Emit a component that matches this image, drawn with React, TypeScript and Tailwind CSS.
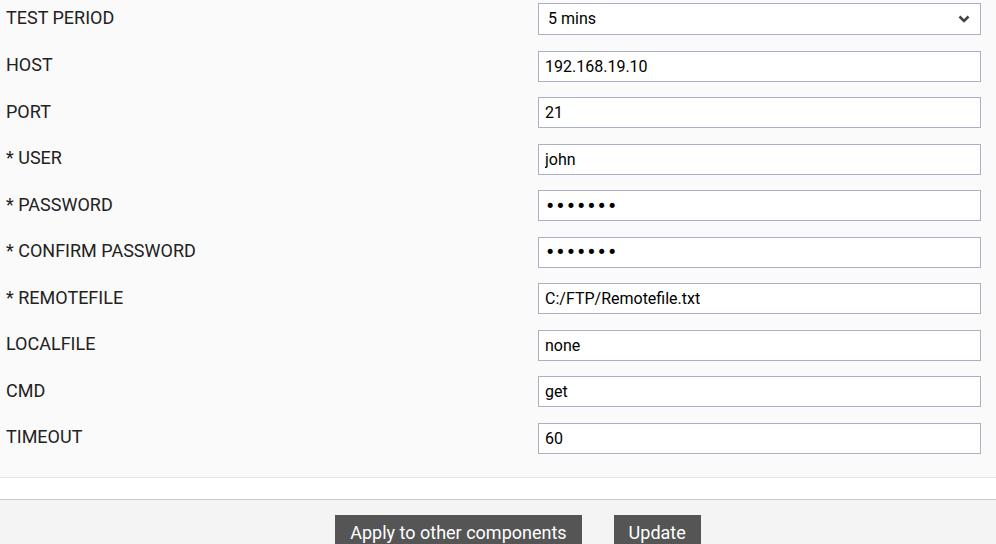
import { useState } from 'react';

const font = { fontFamily: 'Roboto, "Liberation Sans", sans-serif' };
const dotFont = { fontFamily: '"DejaVu Sans", sans-serif', fontSize: '17.5px' };

type Field = { label: string; value: string; type?: string };

const fields: Field[] = [
  { label: 'HOST', value: '192.168.19.10' },
  { label: 'PORT', value: '21' },
  { label: '* USER', value: 'john' },
  { label: '* PASSWORD', value: 'secret1', type: 'password' },
  { label: '* CONFIRM PASSWORD', value: 'secret1', type: 'password' },
  { label: '* REMOTEFILE', value: 'C:/FTP/Remotefile.txt' },
  { label: 'LOCALFILE', value: 'none' },
  { label: 'CMD', value: 'get' },
  { label: 'TIMEOUT', value: '60' },
];

function Row({ label, children }: { label: string; children: React.ReactNode }) {
  return (
    <div className="flex items-center">
      <div className="w-[538px] pl-[6px] text-[18px] leading-[24px] text-[#222] -mt-[2px]">{label}</div>
      {children}
    </div>
  );
}

export default function App() {
  const [period, setPeriod] = useState('5');
  const [values, setValues] = useState(fields.map(f => f.value));

  return (
    <div className="w-[996px] h-[544px] overflow-hidden bg-[#f4f4f4]" style={font}>
      {/* Settings form */}
      <div className="bg-[#fafafa] border-b border-[#e6e6e6] pt-[3px] pb-[23px] flex flex-col gap-[15.5px]">
        <Row label="TEST PERIOD">
          <div className="relative w-[443px] h-[32px]">
            <select
              value={period}
              onChange={e => setPeriod(e.target.value)}
              className="appearance-none w-full h-full bg-white border border-[#a9b1c2] pl-[9px] text-[16px] text-black outline-none"
              style={font}
            >
              <option value="1">1 min</option>
              <option value="5">5 mins</option>
              <option value="10">10 mins</option>
              <option value="15">15 mins</option>
            </select>
            <svg className="absolute right-[11px] top-[12px] pointer-events-none" width="12" height="8" viewBox="0 0 12 8">
              <path d="M1.5 1.5 L6 6 L10.5 1.5" fill="none" stroke="#444" strokeWidth="2.6" />
            </svg>
          </div>
        </Row>
        {fields.map((f, i) => (
          <Row key={f.label} label={f.label}>
            <input
              type={f.type ?? 'text'}
              value={values[i]}
              onChange={e => setValues(v => v.map((x, j) => (j === i ? e.target.value : x)))}
              className="w-[443px] h-[31px] bg-white border border-[#a9b1c2] px-[6px] text-[16px] text-black outline-none"
              style={f.type === 'password' ? dotFont : font}
            />
          </Row>
        ))}
      </div>

      <div className="h-[22px] bg-white border-b border-[#cccccc]" />

      {/* Actions */}
      <div className="flex justify-center gap-[32px] pt-[15px] pl-[40px]">
        <button className="bg-[#555555] text-white text-[18px] h-[36px] px-[15px] leading-none">
          Apply to other components
        </button>
        <button className="bg-[#555555] text-white text-[18px] h-[36px] px-[15px] leading-none">
          Update
        </button>
      </div>
    </div>
  );
}
